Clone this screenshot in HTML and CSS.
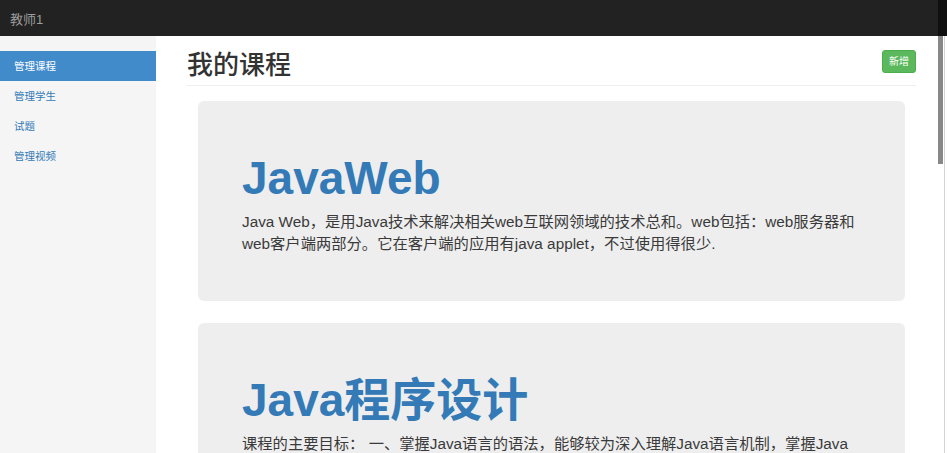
FILE: index.html
```html
<!DOCTYPE html>
<html lang="zh-CN">
<head>
<meta charset="utf-8">
<title>我的课程</title>
<link rel="stylesheet" href="styles.css">
</head>
<body>
<div class="page">
  <div class="app">
    <header class="navbar">
      <span class="brand">教师1</span>
    </header>
    <div class="layout">
      <nav class="sidebar">
        <a class="nav-item active" href="#">管理课程</a>
        <a class="nav-item" href="#">管理学生</a>
        <a class="nav-item" href="#">试题</a>
        <a class="nav-item" href="#">管理视频</a>
      </nav>
      <main class="main">
        <div class="page-header">
          <h1 class="page-title">我的课程</h1>
          <button class="btn-add" type="button">新增</button>
        </div>
        <div class="course-list">
          <section class="course-card">
            <h2 class="course-title">JavaWeb</h2>
            <p class="course-desc">Java Web，是用Java技术来解决相关web互联网领域的技术总和。web包括：web服务器和web客户端两部分。它在客户端的应用有java applet，不过使用得很少.</p>
          </section>
          <section class="course-card">
            <h2 class="course-title">Java程序设计</h2>
            <p class="course-desc">课程的主要目标： 一、掌握Java语言的语法，能够较为深入理解Java语言机制，掌握Java语言面向对象的特点。二、掌握JavaSE中基本的API，掌握在集合、线程、输入输出、文本处理、图形用户界面、网络等方面的应用。</p>
          </section>
        </div>
      </main>
    </div>
  </div>
  <div class="scrollbar">
    <div class="sb-top"></div>
    <div class="sb-track">
      <div class="sb-thumb"></div>
      <div class="sb-line"></div>
    </div>
  </div>
</div>
</body>
</html>
```

FILE: styles.css
```css
html, body {
  margin: 0;
  padding: 0;
  height: 100%;
  overflow: hidden;
  background: #fff;
}

body {
  font-family: "Liberation Sans", "Noto Sans CJK SC", sans-serif;
  color: #333;
}

.page {
  display: flex;
  height: 100vh;
}

.app {
  flex: 1;
  display: flex;
  flex-direction: column;
  min-width: 0;
}

.navbar {
  height: 36px;
  flex: none;
  background: #222;
  display: flex;
  align-items: center;
  padding-left: 10px;
}

.brand {
  color: #9d9d9d;
  font-size: 13px;
  font-family: "Liberation Sans", "Noto Sans CJK SC", sans-serif;
}

.layout {
  flex: 1;
  display: flex;
  min-height: 0;
}

.sidebar {
  width: 156px;
  flex: none;
  background: #f5f5f5;
  padding-top: 15px;
  display: flex;
  flex-direction: column;
}

.nav-item {
  display: block;
  height: 30px;
  line-height: 30px;
  padding-left: 14px;
  font-size: 10.5px;
  color: #337ab7;
  text-decoration: none;
}

.nav-item.active {
  background: #428bca;
  color: #fff;
}

.main {
  flex: 1;
  min-width: 0;
  padding: 0 22px 0 31px;
}

.page-header {
  display: flex;
  justify-content: space-between;
  align-items: flex-start;
  height: 50px;
  box-sizing: border-box;
  padding-top: 14px;
  border-bottom: 1px solid #eee;
}

.page-title {
  margin: 0;
  font-size: 26px;
  line-height: 30px;
  font-weight: 500;
  color: #333;
}

.btn-add {
  height: 23px;
  padding: 0 6px;
  font-size: 10px;
  font-family: "Liberation Sans", "Noto Sans CJK SC", sans-serif;
  color: #fff;
  background: #5cb85c;
  border: 1px solid #4cae4c;
  border-radius: 3px;
  line-height: 21px;
}

.course-list {
  padding: 15px 11px 0;
  display: flex;
  flex-direction: column;
  gap: 22px;
}

.course-card {
  background: #eee;
  border-radius: 6px;
  padding: 52px 44px 46px;
}

.course-title {
  margin: 0;
  font-size: 46px;
  line-height: 50px;
  font-weight: bold;
  color: #337ab7;
}

.course-desc {
  margin: 8px 0 0;
  max-width: 615px;
  font-size: 15.3px;
  line-height: 22px;
  color: #3a3a3a;
}

.scrollbar {
  width: 9px;
  flex: none;
  display: flex;
  flex-direction: column;
}

.sb-top {
  height: 36px;
  background: #0f0f0f;
}

.sb-track {
  flex: 1;
  display: flex;
  align-items: flex-start;
  background: #fff;
}

.sb-thumb {
  width: 5px;
  height: 128px;
  background: #888;
}

.sb-line {
  width: 1px;
  margin-left: 1px;
  align-self: stretch;
  background: #d4d4d4;
}
```
